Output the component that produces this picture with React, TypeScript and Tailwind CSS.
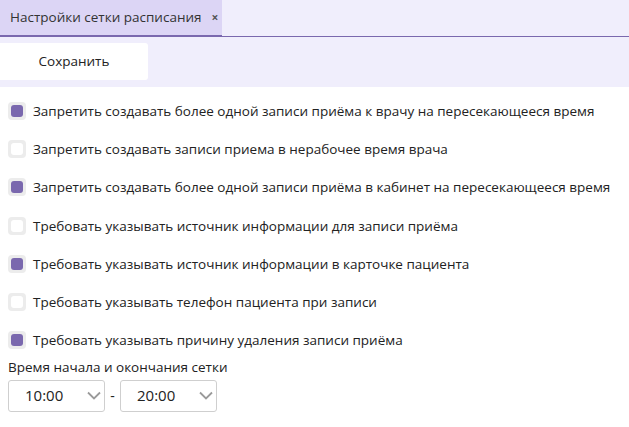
import React from "react";

const rows: [string, boolean][] = [
  ["Запретить создавать более одной записи приёма к врачу на пересекающееся время", true],
  ["Запретить создавать записи приема в нерабочее время врача", false],
  ["Запретить создавать более одной записи приёма в кабинет на пересекающееся время", true],
  ["Требовать указывать источник информации для записи приёма", false],
  ["Требовать указывать источник информации в карточке пациента", true],
  ["Требовать указывать телефон пациента при записи", false],
  ["Требовать указывать причину удаления записи приёма", true],
];

function Chev() {
  return (
    <svg width="14" height="9" viewBox="0 0 14 9" fill="none" stroke="#9a9a9a" strokeWidth="1.8">
      <path d="M1 1.5l6 6 6-6" />
    </svg>
  );
}

function Sel({ v }: { v: string }) {
  return (
    <div className="w-[97px] h-[32px] border border-[#cfcfcf] rounded-[3px] bg-white flex items-center justify-between pl-[16px] pr-[3px] text-[15px] text-[#222]">
      <span>{v}</span>
      <Chev />
    </div>
  );
}

export default function App() {
  return (
    <div className="w-[629px] h-[427px] bg-white text-[#222]" style={{ fontFamily: '"Open Sans", "Noto Sans", sans-serif' }}>
      <div className="bg-[#f0eefc] h-[87px]">
        <div className="flex h-[37px] border-b border-[#7a68ae]">
          <div className="w-[222px] bg-[#dcd5f5] border-b-2 border-[#7a68ae] flex items-center pl-[10px] text-[13.5px] text-[#333] -mb-px">
            <span>Настройки сетки расписания</span>
            <span className="ml-[10px] text-[12px] text-[#555] font-bold">×</span>
          </div>
        </div>
        <div className="pt-[6px]">
          <div className="w-[148px] h-[37px] bg-white rounded-r-[3px] flex items-center justify-center text-[13.5px]">Сохранить</div>
        </div>
      </div>
      <div className="pl-[8px] pt-[5px]">
        {rows.map(([t, c], i) => (
          <div key={i} className="flex items-center h-[38.2px]">
            <div className="w-[18px] h-[18px] rounded-[4px] bg-[#ececec] flex items-center justify-center">
              <div className={`w-[12px] h-[12px] rounded-[3px] ${c ? "bg-[#7a68ae]" : "bg-white"}`} />
            </div>
            <span className="ml-[7px] text-[13.5px] text-[#222]">{t}</span>
          </div>
        ))}
        <div className="text-[13.5px] -mt-[2px]">Время начала и окончания сетки</div>
        <div className="flex items-center mt-[2px]">
          <Sel v="10:00" />
          <span className="w-[15px] text-center text-[14px]">-</span>
          <Sel v="20:00" />
        </div>
      </div>
    </div>
  );
}
